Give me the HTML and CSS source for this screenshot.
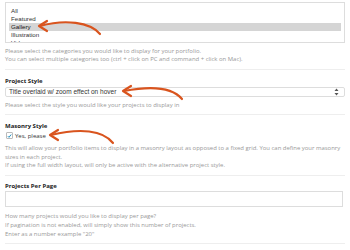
FILE: index.html
```html
<!DOCTYPE html>
<html lang="en">
<head>
  <meta charset="UTF-8" />
  <title>Portfolio Options</title>
  <link rel="stylesheet" href="styles.css">
</head>
<body>

  <div class="page">
    <div class="field first">
      <div class="listbox">
        <div class="option">All</div>
        <div class="option">Featured</div>
        <div class="option selected">Gallery</div>
        <div class="option">Illustration</div>
        <div class="option">Video</div>
      </div>
      <p class="help">Please select the categories you would like to display for your portfolio.<br>
      You can select multiple categories too (ctrl + click on PC and command + click on Mac).</p>
    </div>

    <div class="field">
      <h4>Project Style</h4>
      <div class="select">
        <span>Title overlaid w/ zoom effect on hover</span>
        <svg class="updown" width="5" height="8" viewBox="0 0 5 8">
          <path d="M0.5 3 L2.5 0.5 L4.5 3 Z M0.5 5 L2.5 7.5 L4.5 5 Z" fill="#555"/>
        </svg>
      </div>
      <p class="help">Please select the style you would like your projects to display in</p>
    </div>

    <div class="field">
      <h4>Masonry Style</h4>
      <label class="check">
        <span class="box">
          <svg width="6" height="6" viewBox="0 0 6 6"><path d="M1 3.2 L2.4 4.6 L5 1.2" fill="none" stroke="#1e8cbe" stroke-width="1.2"/></svg>
        </span>
        Yes, please
      </label>
      <p class="help">This will allow your portfolio items to display in a masonry layout as opposed to a fixed grid. You can define your masonry sizes in each project.<br>
      If using the full width layout, will only be active with the alternative project style.</p>
    </div>

    <div class="field last">
      <h4>Projects Per Page</h4>
      <div class="input"></div>
      <p class="help">How many projects would you like to display per page?<br>
      If pagination is not enabled, will simply show this number of projects.<br>
      Enter as a number example "20"</p>
    </div>
  </div>

  <svg class="arrows" width="350" height="250" viewBox="0 0 350 250">
    <g fill="none" stroke="#d9541e" stroke-width="2.2" stroke-linecap="round" stroke-linejoin="round">
      <path d="M100 34 C 90 22, 65 19, 40 26"/>
      <path d="M47 21 L39 26 L47 31"/>
      <path d="M182 99 C 172 87, 150 86, 124 91"/>
      <path d="M131 86 L123 91 L131 96"/>
      <path d="M113 143 C 103 130, 80 128, 51 135"/>
      <path d="M58 130 L50 135 L58 140"/>
    </g>
  </svg>

</body>
</html>
```

FILE: styles.css
```css
* {
  box-sizing: border-box;
  margin: 0;
  padding: 0;
}

body {
  background-color: white;
  color: #333;
  font-family: "Open Sans", sans-serif;
  width: 350px;
  height: 250px;
  overflow: hidden;
  position: relative;
}

.page {
  padding: 2px 5px 0;
}

.field {
  border-bottom: 1px solid #eee;
  padding: 7px 0 4.5px;
}

.field.first {
  padding-top: 0;
  padding-bottom: 5px;
}

.field.last {
  padding-top: 6px;
}

h4 {
  font-size: 6px;
  font-weight: 700;
  color: #222;
  line-height: 8px;
  margin-bottom: 1.5px;
}

.listbox {
  border: 1px solid #ddd;
  height: 41px;
  overflow: hidden;
  padding: 4px 3px 0;
  font-family: "Liberation Sans", Arial, sans-serif;
  font-size: 6.2px;
  color: #333;
}

.option {
  height: 8px;
  line-height: 8px;
  padding-left: 2px;
}

.option.selected {
  background-color: #d5d5d5;
  color: #111;
}

.select {
  border: 1px solid #ddd;
  border-radius: 2px;
  height: 10.5px;
  display: flex;
  align-items: center;
  justify-content: space-between;
  padding: 0 5px 0 3px;
  font-family: "Liberation Sans", Arial, sans-serif;
  font-size: 6.5px;
  color: #333;
}

.check {
  display: flex;
  align-items: center;
  gap: 2px;
  font-size: 6px;
  color: #333;
  height: 9px;
  padding-left: 1px;
}

.box {
  width: 7px;
  height: 7px;
  border: 1px solid #bbb;
  border-radius: 1px;
  display: flex;
  align-items: center;
  justify-content: center;
}

.input {
  border: 1px solid #ddd;
  height: 16px;
  margin-right: 2px;
}

.help {
  font-size: 5.95px;
  line-height: 8.8px;
  color: #999;
  margin-top: 3.5px;
}

.last .help {
  margin-top: 5px;
}

.arrows {
  position: absolute;
  left: 0;
  top: 0;
  pointer-events: none;
}
```
